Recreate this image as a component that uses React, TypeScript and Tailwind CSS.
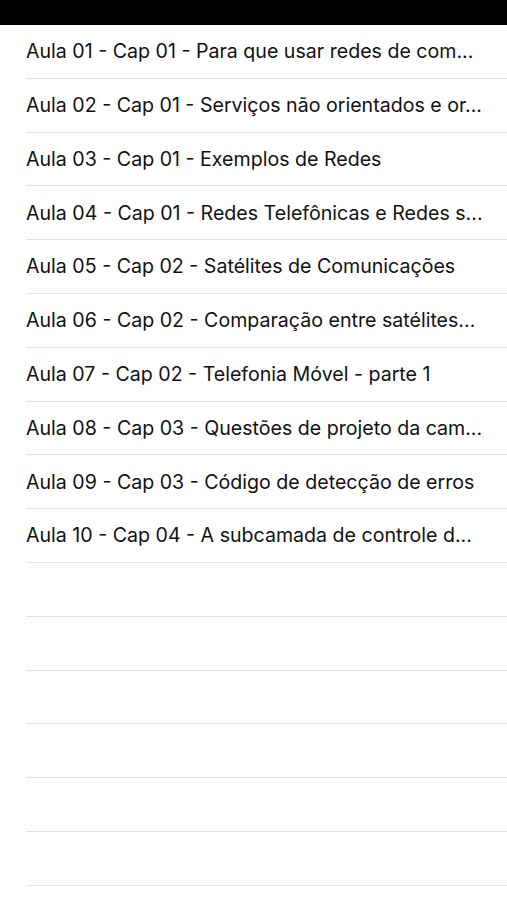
import React from "react";

const aulas = [
  "Aula 01 - Cap 01 - Para que usar redes de com...",
  "Aula 02 - Cap 01 - Serviços não orientados e or...",
  "Aula 03 - Cap 01 - Exemplos de Redes",
  "Aula 04 - Cap 01 - Redes Telefônicas e Redes s...",
  "Aula 05 - Cap 02 - Satélites de Comunicações",
  "Aula 06 - Cap 02 - Comparação entre satélites...",
  "Aula 07 - Cap 02 - Telefonia Móvel - parte 1",
  "Aula 08 - Cap 03 - Questões de projeto da cam...",
  "Aula 09 - Cap 03 - Código de detecção de erros",
  "Aula 10 - Cap 04 - A subcamada de controle d...",
];

// empty rows that fill the rest of the table
const emptyRows = 6;

function App() {
  return (
    <div
      className="min-h-[900px] bg-white"
      style={{ fontFamily: "Inter, 'Noto Sans', sans-serif" }}
    >
      <div className="h-[25px] bg-black" />
      <ul className="pl-[26px]">
        {aulas.map((aula) => (
          <li
            key={aula}
            className="flex h-[53.8px] items-center border-b border-[#e3e3e6] pr-4 pt-px"
          >
            <span className="whitespace-nowrap text-[19.6px] text-[#111]">
              {aula}
            </span>
          </li>
        ))}
        {Array.from({ length: emptyRows }).map((_, i) => (
          <li key={i} className="h-[53.8px] border-b border-[#e3e3e6]" />
        ))}
      </ul>
    </div>
  );
}

export default App;
